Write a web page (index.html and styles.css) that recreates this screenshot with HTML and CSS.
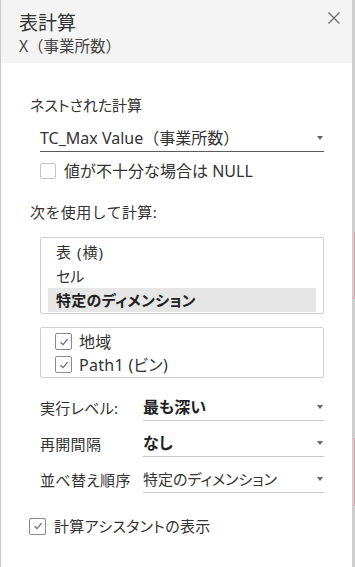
FILE: index.html
```html
<!DOCTYPE html>
<html lang="ja">
<head>
<meta charset="utf-8">
<link rel="stylesheet" href="styles.css">
</head>
<body>
<div class="frame">
  <div class="panel">
    <header class="head">
      <div class="titles">
        <div class="title">表計算</div>
        <div class="sub">X（事業所数）</div>
      </div>
      <button class="close" aria-label="閉じる">
        <svg width="12" height="12" viewBox="0 0 12 12"><path d="M0.5 0.5 L11.5 11.5 M11.5 0.5 L0.5 11.5" stroke="#6b6b6b" stroke-width="1.2" fill="none"/></svg>
      </button>
    </header>
    <main class="content">
      <div class="label first">ネストされた計算</div>
      <div class="select indent main"><span class="val">TC_Max Value（事業所数）</span><i class="caret"></i></div>
      <label class="check indent null"><span class="box"></span><span>値が不十分な場合は NULL</span></label>

      <div class="label compute">次を使用して計算:</div>
      <div class="listbox indent">
        <div class="item">表 (横)</div>
        <div class="item">セル</div>
        <div class="item sel">特定のディメンション</div>
      </div>
      <div class="dimbox indent">
        <label class="check dim"><span class="box on"><svg width="10" height="10" viewBox="0 0 10 10"><path d="M1.5 5.2 L4 7.6 L8.6 2.2" stroke="#707070" stroke-width="1.3" fill="none"/></svg></span><span>地域</span></label>
        <label class="check dim"><span class="box on"><svg width="10" height="10" viewBox="0 0 10 10"><path d="M1.5 5.2 L4 7.6 L8.6 2.2" stroke="#707070" stroke-width="1.3" fill="none"/></svg></span><span>Path1 (ビン)</span></label>
      </div>

      <div class="rows indent">
        <div class="rlabel">実行レベル:</div>
        <div class="select"><span class="val bold">最も深い</span><i class="caret"></i></div>
        <div class="rlabel">再開間隔</div>
        <div class="select"><span class="val bold">なし</span><i class="caret"></i></div>
        <div class="rlabel">並べ替え順序</div>
        <div class="select"><span class="val small">特定のディメンション</span><i class="caret"></i></div>
      </div>

      <label class="check assist"><span class="box on"><svg width="10" height="10" viewBox="0 0 10 10"><path d="M1.5 5.2 L4 7.6 L8.6 2.2" stroke="#707070" stroke-width="1.3" fill="none"/></svg></span><span>計算アシスタントの表示</span></label>
    </main>
  </div>
  <div class="edge"></div>
</div>
</body>
</html>
```

FILE: styles.css
```css
html, body {
  margin: 0;
  padding: 0;
  background: #ffffff;
}
body {
  font-family: "Noto Sans", "Noto Sans CJK JP", sans-serif;
  font-feature-settings: "palt";
  color: #333333;
  font-size: 15px;
}
.frame {
  display: flex;
  width: 355px;
  height: 567px;
  overflow: hidden;
}
.panel {
  width: 351px;
  height: 567px;
  border-left: 1px solid #c9c9c9;
  border-right: 2px solid #cdcdcd;
  background: #ffffff;
  display: flex;
  flex-direction: column;
}
.edge {
  width: 1px;
  height: 567px;
  background: linear-gradient(to bottom,
    #d0d0d0 0, #d0d0d0 232px,
    #d9a3b3 232px, #d9a3b3 299px,
    #d0d0d0 299px, #d0d0d0 438px,
    #d9a3b3 438px, #d9a3b3 506px,
    #d0d0d0 506px);
}
.head {
  background: #f4f4f4;
  height: 63px;
  box-sizing: border-box;
  padding: 11px 12px 0 18px;
  display: flex;
  justify-content: space-between;
  align-items: flex-start;
}
.title {
  font-size: 19px;
  line-height: 24px;
  color: #333;
  font-feature-settings: normal;
}
.sub {
  font-size: 15.5px;
  line-height: 22px;
  color: #444;
  margin-top: 0;
  font-feature-settings: normal;
}
.close {
  border: none;
  background: transparent;
  padding: 0;
  margin-top: 1px;
  width: 12px;
  height: 12px;
  display: flex;
}
.content {
  padding: 0 28px 0 29px;
  display: flex;
  flex-direction: column;
}
.indent {
  margin-left: 10px;
}
.label {
  line-height: 20px;
  font-size: 15px;
}
.label.first {
  margin-top: 32px;
}
.select {
  height: 26px;
  border-bottom: 1px solid #666;
  display: flex;
  align-items: center;
  justify-content: space-between;
  padding-right: 1px;
}
.select.main {
  margin-top: 10px;
  border-bottom-color: #5a5a5a;
}
.select.main .val {
  font-size: 16px;
  font-feature-settings: normal;
}
.rows .select {
  border-bottom-color: #c8c8c8;
}
.val {
  line-height: 26px;
  white-space: nowrap;
}
.bold {
  font-weight: bold;
  color: #222;
}
.caret {
  width: 0;
  height: 0;
  border-left: 3px solid transparent;
  border-right: 3px solid transparent;
  border-top: 4px solid #666;
}
.check {
  display: flex;
  align-items: center;
  gap: 8px;
  line-height: 20px;
}
.box {
  width: 14px;
  height: 14px;
  border: 1px solid #c4c4c4;
  border-radius: 2px;
  background: #fff;
  display: flex;
  align-items: center;
  justify-content: center;
  flex: none;
}
.box.on {
  border-color: #8a8a8a;
}
.null {
  margin-top: 9px;
  font-size: 16px;
  font-feature-settings: normal;
}
.compute {
  margin-top: 21px;
  font-feature-settings: normal;
  letter-spacing: 0.4px;
}
.listbox {
  margin-top: 15px;
  border: 1px solid #cfcfcf;
  border-radius: 2px;
  padding: 2px 7px 1px 7px;
}
.item {
  height: 24px;
  line-height: 24px;
  padding-left: 8px;
  font-size: 15px;
}
.item:first-child {
  letter-spacing: 1px;
}
.item.sel {
  background: #e6e6e6;
  font-weight: bold;
  color: #222;
  letter-spacing: 0.3px;
}
.dimbox {
  margin-top: 13px;
  border: 1px solid #cfcfcf;
  border-radius: 2px;
  padding: 2px 14px 1px 14px;
}
.dimbox .box {
  width: 15px;
  height: 15px;
}
.check.dim {
  height: 23px;
  font-size: 16px;
  gap: 7px;
}
.check.dim span:last-child {
  letter-spacing: 0.3px;
}
.rows {
  margin-top: 16px;
  display: grid;
  grid-template-columns: 103px 1fr;
  row-gap: 9px;
  align-items: center;
}
.rlabel {
  line-height: 26px;
  white-space: nowrap;
  letter-spacing: 0.3px;
}
.rows .select .val {
  font-size: 16px;
}
.rows .select .val.small {
  font-size: 15px;
}
.assist {
  margin-top: 23px;
  margin-left: -1px;
  letter-spacing: 0.3px;
}
.assist .box {
  width: 15px;
  height: 15px;
}
```
